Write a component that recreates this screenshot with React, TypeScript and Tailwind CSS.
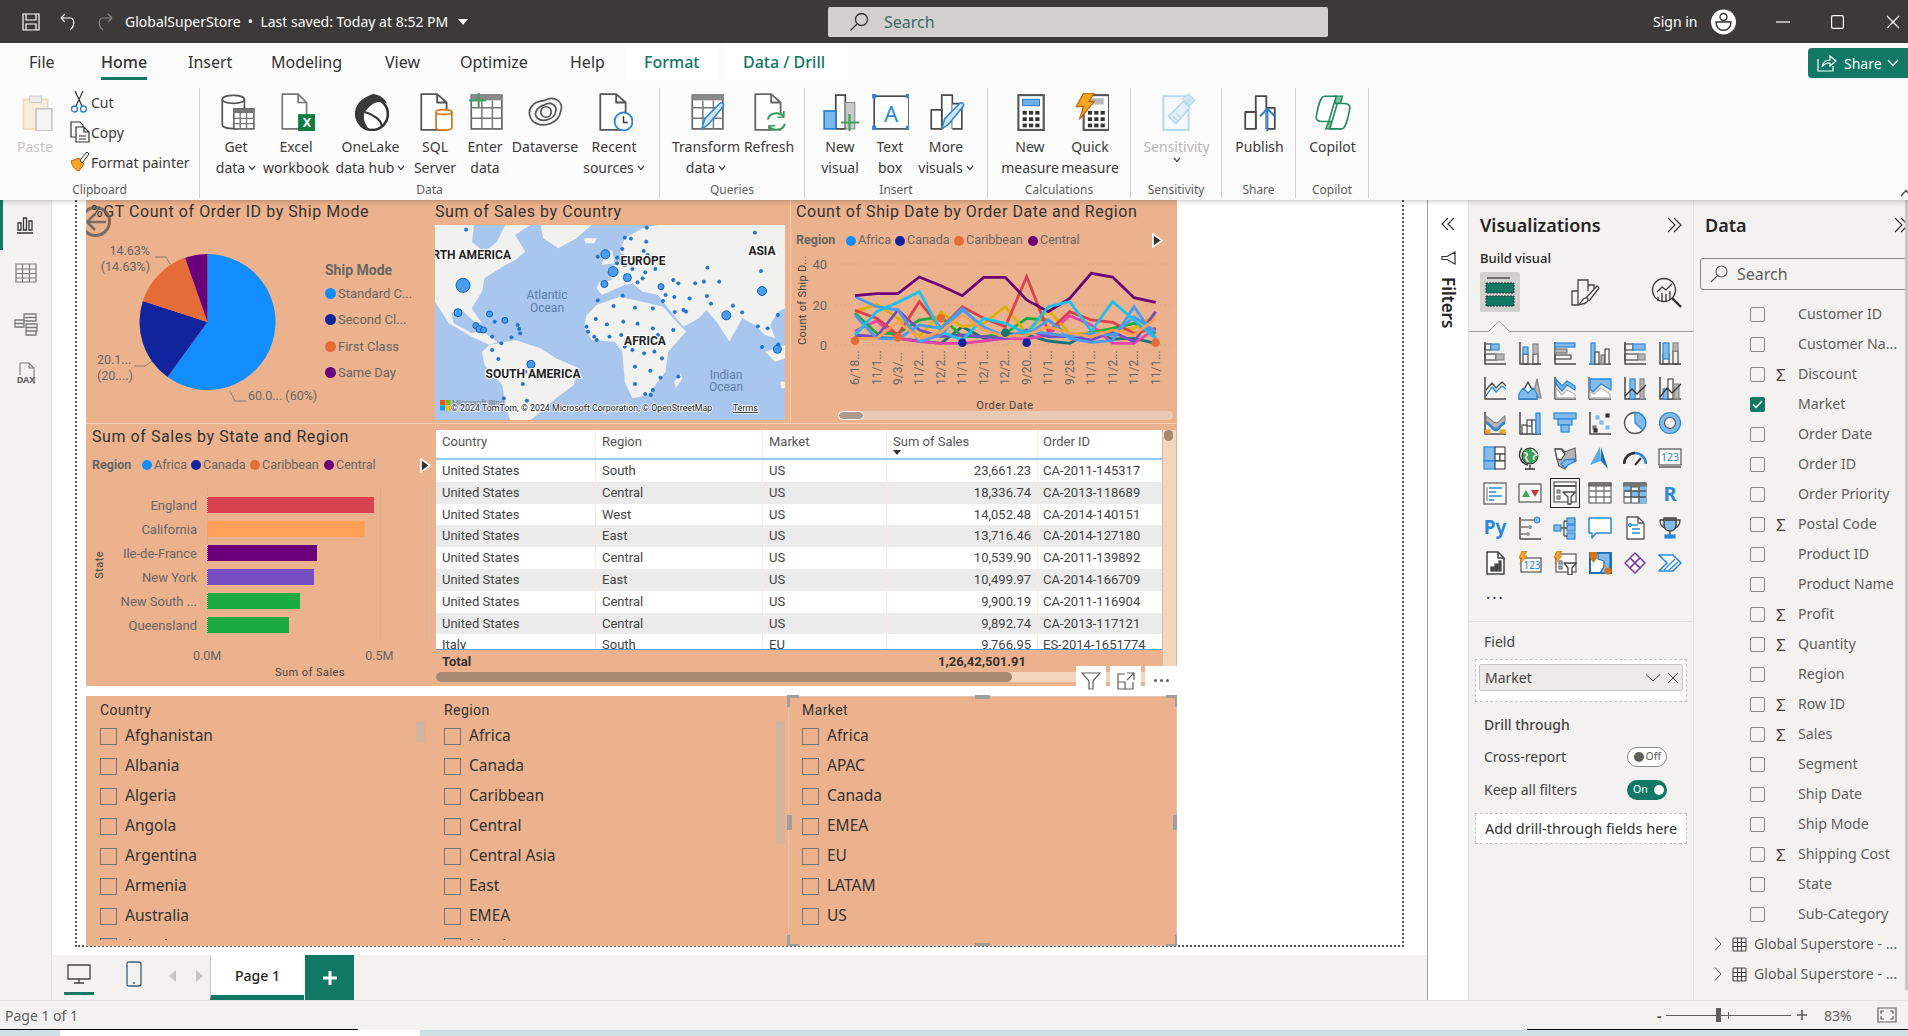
import type { ReactNode } from "react";

const TEAL = "#117865";
const D = "#4a4a4a";
const B = "#2b88d8";
const L = "#82bbea";
const G = "#b5b5b5";
const W = "#ffffff";

function Rc(x: number, y: number, w: number, h: number, f = "none", s = D, sw = 1.2) {
  return <rect x={x} y={y} width={w} height={h} fill={f} stroke={s} strokeWidth={sw} />;
}
function Pt(d: string, s = D, f = "none", sw = 1.3) {
  return <path d={d} stroke={s} fill={f} strokeWidth={sw} strokeLinejoin="round" />;
}
const Axis = Pt("M2 1V23H23", D, "none", 1.5);

function Ico({ size = 38, vb = 36, children, className = "" }: { size?: number; vb?: number; children: ReactNode; className?: string }) {
  return (
    <svg width={size} height={size} viewBox={`0 0 ${vb} ${vb}`} className={`block shrink-0 ${className}`} fill="none">
      {children}
    </svg>
  );
}

const tableIcon = (
  <>
    <rect x="5" y="2" width="29" height="32" fill={W} stroke="#666" strokeWidth="1.6" />
    <rect x="5" y="2" width="29" height="5" fill="#8a8a8a" />
    {Pt("M5 14H34M5 24H34M15 7V34M25 7V34", "#777", "none", 1.4)}
  </>
);
const barsIcon = (
  <>
    {Pt("M14 34V2H24V34", D, W, 1.6)}
    {Pt("M24 10H33V34H24", D, W, 1.6)}
    {Pt("M4 34V16H14V34Z", D, W, 1.6)}
  </>
);
const pencil = Pt("M14 34L17 24L31 10C33 8 36 11 34 13L20 30Z", "#2b88d8", "#cfe5f7", 1.5);
const calc = (
  <>
    <rect x="7" y="2" width="24" height="33" fill={W} stroke="#555" strokeWidth="2" />
    {[18, 24, 30].flatMap((y) =>
      [11, 17, 23].map((x) => <rect key={`${x}${y}`} x={x} y={y - 1} width="4" height="3.5" fill="#333" />),
    )}
  </>
);

const ribbonIcons: Record<string, ReactNode> = {
  get: (
    <>
      <path d="M5 6C5 1 26 1 26 6V30C26 35 5 35 5 30Z" fill={W} stroke="#555" strokeWidth="1.6" />
      <path d="M5 6C5 11 26 11 26 6" stroke="#555" strokeWidth="1.6" />
      <rect x="16" y="15" width="19" height="19" fill={W} stroke="#555" strokeWidth="1.4" />
      <rect x="16" y="15" width="19" height="4" fill="#777" />
      {Pt("M16 24H35M16 29H35M22 19V34M28 19V34", "#777")}
    </>
  ),
  excel: (
    <>
      {Pt("M5 1H20L28 9V34H5Z M20 1V9H28", "#777", W, 1.6)}
      <rect x="20" y="20" width="17" height="16" fill="#107c41" />
      <text x="28.5" y="32.5" textAnchor="middle" fontSize="12" fontWeight="700" fill="#fff" fontFamily="Noto Sans">X</text>
    </>
  ),
  onelake: (
    <>
      <circle cx="19" cy="20" r="15" fill={W} stroke="#333" strokeWidth="2.4" />
      <path d="M4 20C3 8 12 4 20 1C27 2 31 5 33 10C24 6 18 10 12 18C10 24 12 30 17 35C9 33 5 28 4 20Z" fill="#3a3a3a" />
      <path d="M12 18C20 20 28 26 28 31" stroke="#333" strokeWidth="2" />
    </>
  ),
  sql: (
    <>
      {Pt("M5 1H20L29 9V35H5Z M20 1V9H29", "#555", W, 1.7)}
      <path d="M19 18C19 15 34 15 34 18V33C34 36 19 36 19 33Z" fill={W} stroke="#d9731a" strokeWidth="1.6" />
      <path d="M19 18C19 21 34 21 34 18" stroke="#d9731a" strokeWidth="1.6" />
    </>
  ),
  enter: (
    <>
      {tableIcon}
      {Pt("M12 0V14M3 7H19", "#3fa35b", "none", 2)}
    </>
  ),
  dataverse: (
    <>
      <path d="M18 7C26 2 36 8 33 17C31 29 18 32 10 29C3 26 1 17 6 12C10 7 15 8 18 7Z" stroke="#555" strokeWidth="1.6" />
      <path d="M18 11C24 8 30 12 28 18C27 25 16 28 11 24C7 20 9 14 18 11Z" stroke="#555" strokeWidth="1.6" />
      <circle cx="19" cy="18" r="5" stroke="#555" strokeWidth="1.6" />
    </>
  ),
  recent: (
    <>
      {Pt("M5 1H20L29 9V35H5Z M20 1V9H29", "#555", W, 1.7)}
      <circle cx="27" cy="27" r="8.5" fill={W} stroke="#2b88d8" strokeWidth="1.8" />
      {Pt("M27 22V28H31", "#333", "none", 1.4)}
    </>
  ),
  transform: (
    <>
      {tableIcon}
      {pencil}
    </>
  ),
  refresh: (
    <>
      {Pt("M5 1H20L29 9V35H5Z M20 1V9H29", "#666", W, 1.7)}
      <circle cx="25" cy="27" r="9" fill={W} stroke="none" />
      {Pt("M17 25C18 19 27 17 32 22M33 29C32 35 23 37 18 32", "#3b9b5a", "none", 2)}
      {Pt("M32 17V23H26M18 37V31H24", "#3b9b5a", "none", 1.6)}
    </>
  ),
  newvisual: (
    <>
      <rect x="14" y="2" width="9" height="32" fill={W} stroke="#444" strokeWidth="1.6" />
      <rect x="23" y="9" width="9" height="25" fill="#c9c9c9" stroke="#888" />
      <rect x="3" y="17" width="11" height="17" fill="#7db9ea" stroke="#2b7cd3" strokeWidth="1.6" />
      {Pt("M27 20V36M19 28H36", "#3fa35b", "none", 2)}
    </>
  ),
  textbox: (
    <>
      <rect x="3" y="3" width="33" height="31" fill={W} stroke="#444" strokeWidth="1.5" />
      {[
        [1, 1],
        [33, 1],
        [1, 31],
        [33, 31],
      ].map(([x, y]) => (
        <rect key={`${x}${y}`} x={x} y={y} width="4" height="4" fill="#2b88d8" />
      ))}
      <text x="19" y="27" textAnchor="middle" fontSize="21" fill="#2b88d8" fontFamily="Noto Sans">A</text>
    </>
  ),
  more: (
    <>
      {barsIcon}
      {pencil}
    </>
  ),
  measure: (
    <>
      {calc}
      <rect x="11" y="6" width="16" height="6" fill="#6cb0e6" stroke="#2b7cd3" />
    </>
  ),
  quick: (
    <>
      <g transform="translate(5 0)">{calc}</g>
      <rect x="17" y="5" width="14" height="6" fill="#bbb" />
      <path d="M12 0H22L17 8H22L8 25L12 13H5Z" fill="#f6a623" stroke="#c9610e" strokeWidth="1.2" />
    </>
  ),
  sensitivity: (
    <>
      <rect x="5" y="3" width="24" height="32" fill="#f2f8fc" stroke="#b6d8ee" strokeWidth="1.8" />
      <path d="M10 22L24 8L30 14L17 29Z" fill="#e4f0f8" stroke="#b6d8ee" strokeWidth="1.6" />
      <path d="M23 6L29 1L35 7L30 12Z" fill="#cfe4f2" stroke="#b6d8ee" />
      {Pt("M14 22L19 27M17 19L22 24", "#b6d8ee")}
    </>
  ),
  publish: (
    <>
      {Pt("M14 34V3H24V34", D, W, 1.7)}
      {Pt("M4 34V18H14V34Z", D, W, 1.7)}
      {Pt("M24 14H32V34H24", D, W, 1.7)}
      {Pt("M25 36V15M18 22L25 15L32 22", "#2b7cd3", "none", 1.9)}
    </>
  ),
  copilot: (
    <>
      <path d="M19 3H27L25 10H20Z" fill="#7cc29a" stroke="#1f8a5b" strokeWidth="1.3" />
      <path d="M11 34H19L20 27H14Z" fill="#7cc29a" stroke="#1f8a5b" strokeWidth="1.3" />
      <path d="M10 3C6 3 4 12 2 23C2 26 4 27 8 27H14L21 3Z" fill={W} stroke="#1f8a5b" strokeWidth="1.5" />
      <path d="M26 34C30 34 32 25 34 14C34 11 32 10 28 10H22L15 34Z" fill={W} stroke="#1f8a5b" strokeWidth="1.5" />
    </>
  ),
};

const vizIcons: ReactNode[] = [
  <>{Axis}{Rc(2, 3, 6, 6)}{Rc(8, 3, 8, 6, L, B)}{Rc(2, 13, 11, 6)}{Rc(13, 13, 8, 6, G, "#888")}</>,
  <>{Axis}{Rc(5, 13, 5, 10)}{Rc(5, 6, 5, 7, L, B)}{Rc(15, 13, 5, 10)}{Rc(15, 3, 5, 10, G, "#888")}</>,
  <>{Axis}{Rc(2, 2, 20, 4, L, B)}{Rc(2, 8, 12, 4, G, "#777")}{Rc(2, 14, 16, 4)}</>,
  <>{Pt("M1 23H23")}{Rc(3, 2, 4, 21, L, B)}{Rc(7, 11, 4, 12, W)}{Rc(13, 14, 4, 9, G, "#777")}{Rc(17, 8, 4, 15, W)}</>,
  <>{Axis}{Rc(2, 3, 8, 6)}{Rc(10, 3, 12, 6, L, B)}{Rc(2, 13, 13, 6)}{Rc(15, 13, 7, 6, G, "#888")}</>,
  <>{Axis}{Rc(5, 13, 6, 10)}{Rc(5, 2, 6, 16, L, B)}{Rc(15, 10, 5, 13)}{Rc(15, 2, 5, 8, G, "#888")}</>,
  <>{Axis}{Pt("M3 14L9 7L13 12L19 6L23 10")}{Pt("M3 20L9 11L13 16L19 10L23 13", B)}</>,
  <>{Pt("M15 20L19 3L23 22Z", "#888", G)}{Pt("M1 23L10 6L19 23Z", "#333", W)}{Pt("M1 23V18L5 12L10 17L15 12L19 18V23Z", B, L)}</>,
  <>{Axis}{Pt("M3 3L9 10L14 5L22 10V14L14 9L9 15L3 8Z", B, L)}{Pt("M3 12L9 19L14 14L22 18V22H3Z", G, W)}</>,
  <>{Pt("M1 23H23M1 1V23", "#555")}{Pt("M2 3H23V14L13 8L5 16L2 13Z", B, L)}{Pt("M2 16L6 18L13 12L22 18V22H2Z", "#bbb", W)}</>,
  <>{Axis}{Rc(7, 3, 5, 20, L, B)}{Rc(17, 3, 4, 20, G, "#888")}{Pt("M2 20L9 13L14 18L23 9", "#333")}</>,
  <>{Axis}{Rc(5, 13, 6, 10, L, B)}{Rc(10, 3, 5, 20, W)}{Rc(16, 8, 5, 15, G, "#888")}{Pt("M2 21L9 12L14 17L23 8", "#333")}</>,
  <>{Axis}{Pt("M3 5C9 8 9 12 13 12C17 12 17 8 22 5V10C18 13 17 17 13 17C9 17 8 13 3 10Z", "#888", G)}{Pt("M3 12C8 12 8 19 13 19C17 19 17 12 22 12", B, "none", 2.4)}{Rc(3, 19, 4, 3, "#f6a623", "#f6a623")}{Rc(17, 19, 5, 3, "#f6a623", "#f6a623")}</>,
  <>{Axis}{Rc(4, 14, 5, 9, W)}{Rc(9, 9, 5, 6, W)}{Rc(14, 9, 4, 14, W)}{Rc(18, 2, 4, 21, L, B)}</>,
  <>{Rc(1, 2, 22, 6, L, B)}{Rc(5, 8, 14, 6, L, B)}{Rc(8, 14, 8, 7, L, B)}</>,
  <>{Axis}{Rc(5, 15, 3, 3, "#777", "#777")}{Rc(8, 5, 3, 3, L, L)}{Rc(12, 10, 3, 3, L, L)}{Rc(18, 3, 3, 3, "#333", "#333")}{Rc(6, 18, 3, 3, "#333", "#333")}{Rc(18, 15, 3, 3, L, L)}</>,
  <>
    <circle cx="12" cy="12" r="10.5" fill={W} stroke="#555" strokeWidth="1.3" />
    {Pt("M12 12V1.5A10.5 10.5 0 0 1 20 19Z", B, L)}
  </>,
  <>
    <circle cx="12" cy="12" r="8" fill="none" stroke={L} strokeWidth="5" />
    <circle cx="12" cy="12" r="10.5" stroke={B} strokeWidth="1.2" />
    <circle cx="12" cy="12" r="5.5" stroke="#555" strokeWidth="1.2" />
  </>,
  <>{Rc(1, 1, 11, 14, L, B)}{Rc(12, 1, 10, 7, W)}{Rc(12, 8, 5, 7, W)}{Rc(17, 8, 5, 7, W)}{Rc(1, 15, 11, 8, L, B)}{Rc(12, 15, 10, 8, W)}</>,
  <>
    <circle cx="12" cy="10" r="8" fill="#3fa35b" stroke="#333" />
    {Pt("M6 7C9 6 10 9 8 11C7 13 10 14 10 16M14 3C14 6 18 6 19 9C16 9 15 11 16 14", W, "none", 1.6)}
    {Pt("M4 2C-1 8 2 17 10 19M12 19V23M7 23H17", "#333", "none", 1.4)}
  </>,
  <>
    {Pt("M2 3H9L12 6L22 2L23 15L15 16L12 23L6 20L4 13Z", "#666", G)}
    {Pt("M2 3H8L12 8L8 14L4 13Z", "#555", W)}
    {Pt("M12 14L22 13L21 16L15 19L12 22L8 18Z", B, L)}
  </>,
  <>
    <path d="M12 1L2 19L13 15Z" fill="#5aa9e6" />
    <path d="M13 1L13 15L20 23Z" fill="#1f6fb2" />
  </>,
  <>
    {Pt("M1 18A11 11 0 0 1 12 7", "#333", "none", 2.6)}
    {Pt("M12 7A11 11 0 0 1 23 18", B, "none", 2.6)}
    {Pt("M1 21H23", "#fff")}
    {Pt("M12 19L18 12", "#333", "none", 2)}
  </>,
  <>
    {Rc(1, 3, 22, 16, "#f8f8f8", "#555")}
    {Pt("M1 21H23", "#666", "none", 1.6)}
    <text x="12" y="15" textAnchor="middle" fontSize="10.5" fill="#2b88d8" fontFamily="Noto Sans">123</text>
  </>,
  <>{Rc(1, 2, 22, 21, W, "#555")}{Pt("M6 7H19M6 11H13M6 15H19M6 19H11", B, "none", 1.5)}{Pt("M4 6V20", "#888")}</>,
  <>
    {Rc(1, 3, 22, 18, "#f8f8f8", "#555")}
    <path d="M4 16L8 9L12 16Z" fill="#3fa35b" />
    <path d="M13 9H21L17 16Z" fill="#d13438" />
  </>,
  <>{Rc(1, 1, 22, 20, W, "#555")}{Pt("M1 5H23", "#555", "none", 2)}{Rc(4, 9, 3, 3, G, "#777")}{Rc(4, 15, 3, 3, G, "#777")}{Pt("M10 11H22L18 16V23H15V16Z", "#444", W)}</>,
  <>{Rc(1, 2, 22, 20, W, "#666")}{Rc(1, 2, 22, 3, "#777", "#666")}{Pt("M1 10H23M1 16H23M8 5V22M16 5V22", "#777")}</>,
  <>{Rc(1, 2, 22, 20, W, "#666")}{Rc(1, 2, 22, 4, "#777", "#666")}{Rc(8, 10, 7, 6, L, L)}{Rc(16, 6, 7, 16, L, L)}{Rc(1, 6, 7, 4, L, L)}{Pt("M1 10H23M1 16H23M8 5V22M16 5V22", "#555")}</>,
  <text x="12" y="20" textAnchor="middle" fontSize="20" fontWeight="700" fill="#2b88d8" fontFamily="Noto Sans">R</text>,
  <text x="12" y="18" textAnchor="middle" fontSize="19" fontWeight="700" fill="#2b88d8" fontFamily="Noto Sans">Py</text>,
  <>{Axis}{Pt("M2 4H16M2 11H10M2 18H8", "#777")}<circle cx="19" cy="4" r="3" fill={L} stroke={B} /><circle cx="12" cy="11" r="2" fill="#999" /><circle cx="10" cy="18" r="2" fill="#999" /></>,
  <>{Rc(1, 9, 7, 6, L, B)}{Rc(14, 2, 8, 6, L, B)}{Rc(14, 9, 8, 6, L, B)}{Rc(14, 17, 8, 6, L, B)}{Pt("M8 12H14M11 5V20M11 5H14M11 20H14", "#555")}</>,
  <>{Pt("M1 2H23V17H8L4 22V17H1Z", B, W, 1.5)}</>,
  <>{Pt("M4 1H15L21 7V23H4Z M15 1V7H21", "#555", W)}{Pt("M9 9H15M9 13H17M9 17H17", B)}<circle cx="7" cy="9" r="1.6" fill={L} stroke={B} /></>,
  <>
    {Pt("M6 2H18V9C18 13 15 15 12 15C9 15 6 13 6 9Z", "#444", L, 1.5)}
    <rect x="6" y="2" width="12" height="3" fill="#555" />
    {Pt("M6 4H2C2 9 4 11 7 12M18 4H22C22 9 20 11 17 12M12 15V19", "#444")}
    {Rc(7, 19, 10, 3, B, B)}
  </>,
  <>{Pt("M4 1H15L21 7V23H4Z M15 1V7H21", "#444", W, 1.5)}{Rc(8, 16, 3, 4, "#444", "#444")}{Rc(12, 13, 3, 7, "#444", "#444")}{Rc(16, 10, 2, 10, "#444", "#444")}</>,
  <>
    {Rc(3, 7, 20, 14, "#f8f8f8", "#555")}
    <text x="14" y="18" textAnchor="middle" fontSize="10" fill="#2b88d8" fontFamily="Noto Sans">123</text>
    <path d="M4 0H9L6 5H9L2 13L4 7H1Z" fill="#f6a623" stroke="#c9610e" strokeWidth=".6" />
  </>,
  <>
    {Rc(3, 3, 20, 18, W, "#555")}
    {Rc(6, 10, 3, 3, G, "#777")}
    {Rc(6, 15, 3, 3, G, "#777")}
    {Pt("M11 12H23L19 17V24H15V17Z", "#444", W)}
    <path d="M4 0H9L6 5H9L2 13L4 7H1Z" fill="#f6a623" stroke="#c9610e" strokeWidth=".6" />
  </>,
  <>
    {Rc(2, 2, 21, 20, W, "#1f6fb2", 2)}
    {Pt("M10 2V8L16 10V16L12 22H22V2Z", "#1f6fb2", L)}
    <path d="M2 1H9V7L5.5 12L2 7Z" fill="#d9731a" />
    <circle cx="20" cy="20" r="3.5" fill="#d9731a" />
    <circle cx="16" cy="15" r="1.3" fill="#d9731a" />
  </>,
  <>
    {Pt("M12 2L17 7L12 12L7 7Z", "#7b3ea8", W, 1.6)}
    {Pt("M7 7L12 12L7 17L2 12Z", "#7b3ea8", W, 1.6)}
    {Pt("M17 7L22 12L17 17L12 12Z", "#7b3ea8", W, 1.6)}
    {Pt("M12 12L17 17L12 22L7 17Z", "#7b3ea8", W, 1.6)}
  </>,
  <>{Pt("M1 4H15L23 12L15 20H1L9 12Z", B, W, 1.6)}{Pt("M6 19L17 8M11 19L20 11", B)}</>,
];

function Chev({ className = "" }: { className?: string }) {
  return (
    <svg width="8" height="6" viewBox="0 0 8 6" className={`inline-block ${className}`} fill="none">
      <path d="M1 1L4 4.5L7 1" stroke="#444" strokeWidth="1.2" />
    </svg>
  );
}

type RibbonItem = { w: number; icon: string; l1: string; l2?: string; chev?: boolean; muted?: boolean };

function Item({ w, icon, l1, l2, chev, muted }: RibbonItem) {
  return (
    <div className={`flex flex-col items-center pt-[5px] shrink-0 ${muted ? "text-[#b9b7b5]" : "text-[#3b3a39]"}`} style={{ width: w }}>
      <Ico>{ribbonIcons[icon]}</Ico>
      <div className="mt-[5px] text-[14px] leading-[21px] whitespace-nowrap text-center">{l1}</div>
      <div className="text-[14px] leading-[21px] whitespace-nowrap text-center flex items-center gap-[3px]">
        {l2}
        {chev && <Chev />}
      </div>
    </div>
  );
}

function Group({ w, pl, label, children }: { w: number; pl: number; label: string; children: ReactNode }) {
  return (
    <div className="flex flex-col shrink-0 border-r border-[#d6d4d2] h-[110px]" style={{ width: w }}>
      <div className="flex h-[94px]" style={{ paddingLeft: pl }}>
        {children}
      </div>
      <div className="text-center text-[12px] leading-[17px] text-[#605e5c]">{label}</div>
    </div>
  );
}

function TitleBar() {
  return (
    <div className="flex items-center h-[43px] shrink-0 bg-[#3b3a39] text-white">
      <div className="flex items-center w-[828px] pl-[22px]">
        <svg width="18" height="18" viewBox="0 0 18 18" fill="none" stroke="#fff" strokeWidth="1.2">
          <path d="M1 1H17V17H1ZM4 1V7H14V1M4 17V11H14V17" />
        </svg>
        <svg width="18" height="20" viewBox="0 0 18 20" fill="none" stroke="#fff" strokeWidth="1.2" className="ml-[19px]">
          <path d="M2 6H11C16 6 16 14 11 18M2 6L6 2M2 6L6 10" />
        </svg>
        <svg width="18" height="20" viewBox="0 0 18 20" fill="none" stroke="#8a8886" strokeWidth="1.2" className="ml-[19px]">
          <path d="M16 6H7C2 6 2 14 7 18M16 6L12 2M16 6L12 10" />
        </svg>
        <span className="ml-[11px] text-[14px] whitespace-nowrap">GlobalSuperStore&nbsp; •&nbsp; Last saved: Today at 8:52 PM</span>
        <svg width="10" height="6" viewBox="0 0 10 6" className="ml-[10px]">
          <path d="M0 0H10L5 6Z" fill="#fff" />
        </svg>
      </div>
      <div className="flex items-center w-[500px] h-[30px] bg-[#d2d0ce] rounded-[2px] pl-[21px] shrink-0">
        <svg width="20" height="20" viewBox="0 0 20 20" fill="none" stroke="#333" strokeWidth="1.3">
          <circle cx="12.5" cy="7.5" r="6" />
          <path d="M8 12L1.5 18.5" />
        </svg>
        <span className="ml-[15px] text-[16px] text-[#3e6b65]">Search</span>
      </div>
      <div className="flex items-center pl-[325px]">
        <span className="text-[14px] w-[58px] whitespace-nowrap">Sign in</span>
        <svg width="25" height="30" viewBox="0 0 25 30" fill="none" stroke="#333" strokeWidth="1.4">
          <circle cx="12.5" cy="15" r="12.5" fill="#fff" stroke="none" />
          <circle cx="12.5" cy="10" r="3.5" />
          <path d="M5 15H20C20 26 5 26 5 15Z" />
        </svg>
        <svg width="14" height="14" viewBox="0 0 14 14" stroke="#fff" strokeWidth="1.2" className="ml-[40px]">
          <path d="M0 7H14" />
        </svg>
        <svg width="13" height="14" viewBox="0 0 13 14" fill="none" stroke="#fff" strokeWidth="1.2" className="ml-[41px]">
          <rect x=".6" y=".6" width="11.8" height="12.8" rx="1.5" />
        </svg>
        <svg width="14" height="14" viewBox="0 0 14 14" stroke="#fff" strokeWidth="1.2" className="ml-[42px]">
          <path d="M1 1L13 13M13 1L1 13" />
        </svg>
      </div>
    </div>
  );
}

function Tabs() {
  const plain = [
    ["File", 72],
    ["Insert", 83],
    ["Modeling", 114],
    ["View", 75],
    ["Optimize", 110],
    ["Help", 55],
  ] as const;
  return (
    <div className="flex h-[37px] pl-[29px] text-[16px] text-[#323130] shrink-0">
      <div className="flex items-center" style={{ width: plain[0][1] }}>File</div>
      <div className="w-[87px] flex">
        <span className="flex items-center h-full border-b-[3px] border-[#117865] pt-[3px] font-medium">Home</span>
      </div>
      {plain.slice(1).map(([t, w]) => (
        <div key={t} className="flex items-center" style={{ width: w }}>{t}</div>
      ))}
      <div className="w-[94px] pl-[19px] flex items-center bg-white text-[#117865] font-medium">Format</div>
      <div className="w-[124px] ml-[5px] pl-[19px] flex items-center bg-white text-[#117865] font-medium">Data / Drill</div>
      <div className="flex-1 flex justify-end pt-[5px]">
        <div className="flex items-center w-[100px] h-[30px] bg-[#117865] rounded-l-[4px] text-white text-[14px] pl-[9px]">
          <svg width="20" height="18" viewBox="0 0 20 18" fill="none" stroke="#fff" strokeWidth="1.2">
            <path d="M1 5V17H16V12M5 13C6 8 9 6 13 6V2L19 7L13 12V9C10 9 7 10 5 13Z" />
          </svg>
          <span className="ml-[7px]">Share</span>
          <svg width="12" height="8" viewBox="0 0 12 8" fill="none" stroke="#fff" strokeWidth="1.3" className="ml-[5px]">
            <path d="M1 1L6 6.5L11 1" />
          </svg>
        </div>
      </div>
    </div>
  );
}

function Ribbon() {
  return (
    <div className="relative z-20 h-[157px] shrink-0 bg-[#fbfbfb] shadow-[0_2px_4px_rgba(0,0,0,0.18)] overflow-hidden">
      <Tabs />
      <div className="flex pt-[8px]">
        <Group w={200} pl={0} label="Clipboard">
          <div className="w-[70px] flex flex-col items-center pt-[5px] text-[#c8c6c4]">
            <Ico>
              <rect x="7" y="6" width="23" height="28" fill="#f9ecd9" stroke="#ecd9bd" strokeWidth="1.6" />
              <rect x="13" y="3" width="11" height="6" fill="#eee" stroke="#ccc" />
              <rect x="19" y="15" width="15" height="21" fill="#f5f5f5" stroke="#c4c4c4" strokeWidth="1.5" />
            </Ico>
            <div className="mt-[5px] text-[14px] leading-[21px]">Paste</div>
          </div>
          <div className="flex flex-col -mt-[1px] text-[14px] text-[#3b3a39]">
            <div className="flex items-center h-[30px]">
              <svg width="18" height="24" viewBox="0 0 18 24" fill="none" className="mr-[3px]">
                <path d="M5 1L12 16M13 1L6 16" stroke="#333" strokeWidth="1.2" />
                <circle cx="4.5" cy="19" r="3" stroke="#2b7cd3" strokeWidth="1.3" />
                <circle cx="13.5" cy="19" r="3" stroke="#2b7cd3" strokeWidth="1.3" />
              </svg>
              Cut
            </div>
            <div className="flex items-center h-[30px]">
              <svg width="20" height="22" viewBox="0 0 20 22" fill="none" stroke="#333" strokeWidth="1.2" className="mr-[1px]">
                <path d="M6 16H1V1H10L13 4V6M6 6H14L19 11V21H6Z M14 6V11H19M9 15H16M9 18H16" />
              </svg>
              Copy
            </div>
            <div className="flex items-center h-[30px] whitespace-nowrap">
              <svg width="20" height="22" viewBox="0 0 20 22" fill="none" className="mr-[1px]">
                <path d="M1 10L9 7L14 13L9 20C5 19 2 15 1 10Z" fill="#f6a623" stroke="#c9610e" />
                <path d="M10 9L17 1L19 3L12 12Z" fill="#fff" stroke="#333" />
              </svg>
              Format painter
            </div>
          </div>
        </Group>
        <Group w={460} pl={12} label="Data">
          <Item w={48} icon="get" l1="Get" l2="data" chev />
          <Item w={72} icon="excel" l1="Excel" l2="workbook" />
          <Item w={77} icon="onelake" l1="OneLake" l2="data hub" chev />
          <Item w={52} icon="sql" l1="SQL" l2="Server" />
          <Item w={48} icon="enter" l1="Enter" l2="data" />
          <Item w={72} icon="dataverse" l1="Dataverse" />
          <Item w={66} icon="recent" l1="Recent" l2="sources" chev />
        </Group>
        <Group w={145} pl={12} label="Queries">
          <Item w={68} icon="transform" l1="Transform" l2="data" chev />
          <Item w={58} icon="refresh" l1="Refresh" />
        </Group>
        <Group w={183} pl={11} label="Insert">
          <Item w={48} icon="newvisual" l1="New" l2="visual" />
          <Item w={52} icon="textbox" l1="Text" l2="box" />
          <Item w={60} icon="more" l1="More" l2="visuals" chev />
        </Group>
        <Group w={143} pl={10} label="Calculations">
          <Item w={64} icon="measure" l1="New" l2="measure" />
          <Item w={56} icon="quick" l1="Quick" l2="measure" />
        </Group>
        <Group w={91} pl={0} label="Sensitivity">
          <Item w={91} icon="sensitivity" l1="Sensitivity" muted chev />
        </Group>
        <Group w={74} pl={1} label="Share">
          <Item w={73} icon="publish" l1="Publish" />
        </Group>
        <Group w={73} pl={0} label="Copilot">
          <Item w={73} icon="copilot" l1="Copilot" />
        </Group>
      </div>
      <svg width="12" height="8" viewBox="0 0 12 8" fill="none" stroke="#444" strokeWidth="1.3" className="absolute right-[-4px] bottom-[3px]">
        <path d="M1 7L6 1.5L11 7" />
      </svg>
    </div>
  );
}

function LeftRail() {
  return (
    <div className="w-[52px] shrink-0 bg-[#f3f2f1] border-r border-[#e1dfdd] flex flex-col">
      <div className="h-[50px] border-l-[3px] border-[#117865] pt-[17px] pl-[13px]">
        <svg width="18" height="17" viewBox="0 0 18 17" fill="none" stroke="#333" strokeWidth="1.3">
          <path d="M1 16H17M2 13V6H5V13ZM7.5 13V1H10.5V13ZM13 13V4H16V13Z" />
        </svg>
      </div>
      <div className="pl-[15px] pt-[13px]">
        <svg width="22" height="20" viewBox="0 0 22 20" fill="none" stroke="#7a7a7a" strokeWidth="1.2">
          <path d="M1 1H21V19H1ZM1 6H21M1 10.5H21M1 15H21M7.5 1V19M14.5 1V19" />
        </svg>
      </div>
      <div className="pl-[14px] pt-[29px]">
        <svg width="24" height="24" viewBox="0 0 24 24" fill="none" stroke="#7a7a7a" strokeWidth="1.3">
          <path d="M10 2H22V9H10ZM10 5.5H22M12 12H23V19H12ZM12 15.5H23M1 8H10V15H1ZM1 11.5H10M12 19V23H22V19" />
        </svg>
      </div>
      <div className="pl-[14px] pt-[26px]">
        <svg width="24" height="24" viewBox="0 0 24 24" fill="none" stroke="#7a7a7a" strokeWidth="1.1">
          <path d="M6 13V1H15L20 6V22M15 1V6H20" />
          <text x="12" y="21" textAnchor="middle" fontSize="9" fontWeight="700" fill="#666" stroke="none" fontFamily="Noto Sans">DAX</text>
        </svg>
      </div>
    </div>
  );
}

function pieSlice(cx: number, cy: number, r: number, a0: number, a1: number) {
  const p = (a: number) => [cx + r * Math.sin(a * 2 * Math.PI), cy - r * Math.cos(a * 2 * Math.PI)];
  const [x0, y0] = p(a0);
  const [x1, y1] = p(a1);
  return `M${cx} ${cy}L${x0} ${y0}A${r} ${r} 0 ${a1 - a0 > 0.5 ? 1 : 0} 1 ${x1} ${y1}Z`;
}

function ChartTitle({ children, className = "" }: { children: ReactNode; className?: string }) {
  return (
    <div className={`font-['Roboto',sans-serif] text-[16px] leading-[24px] tracking-[0.035em] text-[#333] whitespace-nowrap ${className}`}>
      {children}
    </div>
  );
}

function PiePane() {
  const legend = [
    ["Standard C...", "#118dff"],
    ["Second Cl...", "#12239e"],
    ["First Class", "#e66c37"],
    ["Same Day", "#6b007b"],
  ];
  return (
    <div className="w-[349px] shrink-0 relative">
      <ChartTitle className="pl-[5px]">%GT Count of Order ID by Ship Mode</ChartTitle>
      <div className="absolute left-[-6px] top-[6px] w-[31px] h-[31px] rounded-full border-[3px] border-[#5f5b58] opacity-80 flex items-center justify-center">
        <svg width="22" height="18" viewBox="0 0 22 18" fill="none" stroke="#5f5b58" strokeWidth="2.6">
          <path d="M21 9H2M10 1L2 9L10 17" />
        </svg>
      </div>
      <div className="flex">
        <svg width="235" height="200" viewBox="86 224 235 200" className="shrink-0 font-['Roboto',sans-serif]">
          <path d={pieSlice(207.5, 322, 68, 0, 0.6)} fill="#118dff" />
          <path d={pieSlice(207.5, 322, 68, 0.6, 0.8)} fill="#12239e" />
          <path d={pieSlice(207.5, 322, 68, 0.8, 0.9463)} fill="#e66c37" />
          <path d={pieSlice(207.5, 322, 68, 0.9463, 1)} fill="#6b007b" />
          <g fill="none" stroke="#8f7b6c">
            <path d="M155 257H166L170 264" />
            <path d="M134 366H145L152 361" />
            <path d="M230 391L235 401H246" />
          </g>
          <g fontSize="12.5" fill="#666">
            <text x="150" y="255" textAnchor="end">14.63%</text>
            <text x="150" y="271" textAnchor="end">(14.63%)</text>
            <text x="97" y="364">20.1...</text>
            <text x="97" y="380">(20....)</text>
            <text x="248" y="400">60.0... (60%)</text>
          </g>
        </svg>
        <div className="pl-[4px] pt-[36px] font-['Roboto',sans-serif]">
          <div className="text-[14px] leading-[20px] font-bold text-[#666]">Ship Mode</div>
          {legend.map(([t, c]) => (
            <div key={t} className="flex items-center h-[26.5px] text-[13px] text-[#666] whitespace-nowrap">
              <span className="w-[11px] h-[11px] rounded-full mr-[2px]" style={{ background: c }} />
              {t}
            </div>
          ))}
        </div>
      </div>
    </div>
  );
}

const mapPolys = [
  "853,90 1040,90 1010,120 1030,170 1010,195 985,215 950,250 945,290 925,340 945,385 930,380 905,345 885,355 890,385 925,415 945,405 960,425 975,440 960,450 925,425 880,385 853,320",
  "1060,90 1160,90 1130,130 1095,160 1065,130",
  "960,450 1010,435 1060,460 1090,490 1135,520 1125,570 1090,610 1060,650 1040,675 1000,675 990,620 985,570 950,510 945,470",
  "1170,330 1215,305 1260,320 1300,335 1320,370 1345,410 1310,470 1305,530 1270,600 1240,610 1225,560 1220,470 1205,440 1160,435 1145,395 1150,360",
  "1170,280 1175,262 1200,255 1190,225 1215,200 1240,195 1215,170 1225,130 1260,100 1290,90 1539,90 1539,340 1525,350 1510,390 1520,430 1500,420 1480,390 1455,370 1430,440 1405,380 1385,345 1370,370 1340,395 1305,330 1290,300 1260,290 1240,265 1225,270 1210,280 1180,300",
  "1185,170 1200,165 1205,205 1180,210",
  "1145,130 1170,130 1165,145 1148,145",
  "1322,560 1335,535 1338,550 1325,580",
  "1500,470 1539,450 1539,490 1520,500",
  "1530,560 1539,560 1539,580 1532,580",
];
const bigDots = [
  [908, 271, 7],
  [898, 353, 4],
  [1187, 178, 4.5],
  [1202, 230, 5],
  [1225, 200, 4.5],
  [1185, 267, 3.5],
  [1494, 288, 4.5],
  [1424, 361, 4.5],
  [1524, 463, 4],
  [1041, 508, 4],
  [960, 357, 3],
  [990, 376, 3],
  [933, 392, 3],
  [940, 402, 3.5],
  [948, 405, 3],
  [1230, 248, 4],
  [1296, 275, 3],
];
const smallDots = "914,104 1268,98 1225,128 1237,131 1267,140 1480,113 1220,162 1262,168 1172,185 1210,188 1270,180 1210,205 1240,222 1265,232 1285,222 1250,262 1260,250 1320,255 1330,265 1363,265 1380,260 1410,260 1387,218 1492,228 1305,300 1322,306 1352,310 1386,303 1394,326 1437,332 1455,352 1486,394 1505,400 1525,360 1494,456 1526,448 1172,316 1203,333 1221,302 1245,338 1280,340 1300,318 1323,351 1340,345 1345,350 1150,395 1168,372 1190,388 1222,380 1250,386 1280,400 1320,405 1153,410 1165,425 1170,435 1195,425 1218,420 1290,420 1225,455 1240,465 1263,475 1283,470 1298,490 1245,515 1275,527 1295,548 1245,567 1280,585 1265,597 1276,600 1330,545 965,425 970,380 1003,427 983,445 1015,390 1018,402 1020,415 965,465 977,492 1030,530 1025,567 988,610 1033,617 1045,640"
  .split(" ")
  .map((s) => s.split(",").map(Number));
const mx = (x: number) => (x - 853) / 1.96;
const my = (y: number) => (y - 90) / 3;

function MapPane() {
  return (
    <div className="w-[355px] shrink-0">
      <ChartTitle className="h-[25px]">Sum of Sales by Country</ChartTitle>
      <svg width="350" height="195" viewBox="0 0 350 195" className="block font-['Roboto',sans-serif]">
        <rect width="350" height="195" fill="#a9c6ef" />
        {mapPolys.map((p) => (
          <polygon
            key={p}
            fill="#f1f1ef"
            points={p
              .split(" ")
              .map((s) => {
                const [x, y] = s.split(",").map(Number);
                return `${mx(x)},${my(y)}`;
              })
              .join(" ")}
          />
        ))}
        <polygon points="39,0 70,0 62,17 49,27 37,17" fill="#a9c6ef" />
        {bigDots.map(([x, y, r]) => (
          <circle key={`${x}${y}`} cx={mx(x)} cy={my(y)} r={r} fill="#4a9cf0" stroke="#0f5fb5" />
        ))}
        {smallDots.map(([x, y]) => (
          <circle key={`${x}${y}`} cx={mx(x)} cy={my(y)} r="1.7" fill="#1a78e0" stroke="#0f5fb5" strokeWidth=".5" />
        ))}
        <g fontSize="12" fill="#222" fontWeight="700" stroke="#fff" strokeWidth="2.2" paintOrder="stroke" textAnchor="middle">
          <text x="76" y="34" textAnchor="end">NORTH AMERICA</text>
          <text x="208" y="40">EUROPE</text>
          <text x="327" y="30">ASIA</text>
          <text x="210" y="120">AFRICA</text>
          <text x="98" y="153">SOUTH AMERICA</text>
        </g>
        <g fontSize="12" fill="#5d7fa8" textAnchor="middle">
          <text x="112" y="74">Atlantic</text>
          <text x="112" y="87">Ocean</text>
          <text x="291" y="154">Indian</text>
          <text x="291" y="166">Ocean</text>
        </g>
        <rect x="5" y="175" width="5" height="5" fill="#f25022" />
        <rect x="10.5" y="175" width="5" height="5" fill="#7fba00" />
        <rect x="5" y="180.5" width="5" height="5" fill="#00a4ef" />
        <rect x="10.5" y="180.5" width="5" height="5" fill="#ffb900" />
        <text x="17" y="180" fontSize="8" fill="#777">Microsoft Bing</text>
        <text x="16" y="186" fontSize="8.8" fill="#222" stroke="#fff" strokeWidth="1.5" paintOrder="stroke">© 2024 TomTom, © 2024 Microsoft Corporation, © OpenStreetMap</text>
        <text x="298" y="186" fontSize="8.8" fill="#222" stroke="#fff" strokeWidth="1.5" paintOrder="stroke" textDecoration="underline">Terms</text>
      </svg>
    </div>
  );
}

function Legend() {
  return (
    <div className="flex items-center h-[20px] font-['Roboto',sans-serif] text-[12.5px] text-[#666] whitespace-nowrap">
      <span className="font-bold w-[50px]">Region</span>
      <span className="flex items-center gap-[2px] w-[49px]"><i className="w-[10px] h-[10px] rounded-full bg-[#118dff]" />Africa</span>
      <span className="flex items-center gap-[2px] w-[59px]"><i className="w-[10px] h-[10px] rounded-full bg-[#12239e]" />Canada</span>
      <span className="flex items-center gap-[2px] w-[74px]"><i className="w-[10px] h-[10px] rounded-full bg-[#e66c37]" />Caribbean</span>
      <span className="flex items-center gap-[2px]"><i className="w-[10px] h-[10px] rounded-full bg-[#6b007b]" />Central</span>
    </div>
  );
}

const PlayArrow = (
  <svg width="11" height="15" viewBox="0 0 11 15">
    <path d="M1 1L10 7.5L1 14Z" fill="#333" stroke="#fff" strokeWidth="1.6" />
  </svg>
);

const xs = [222, 287, 351, 415, 480, 544, 608, 673, 737, 802, 866, 931, 995, 1059, 1124];
const series: [string, number[]][] = [
  ["#197278", [425, 428, 430, 438, 445, 395, 430, 415, 420, 438, 445, 410, 432, 430, 445]],
  ["#e645ab", [408, 378, 430, 440, 445, 445, 438, 430, 432, 420, 362, 390, 445, 445, 400]],
  ["#1aab40", [355, 415, 415, 375, 365, 425, 425, 415, 370, 375, 425, 412, 400, 385, 415]],
  ["#d9b300", [350, 328, 370, 425, 352, 395, 385, 335, 415, 345, 415, 415, 410, 400, 360]],
  ["#744ec2", [420, 425, 345, 405, 425, 420, 425, 430, 405, 425, 425, 435, 410, 440, 350]],
  ["#d9434f", [346, 370, 420, 320, 400, 335, 370, 395, 245, 410, 350, 375, 382, 415, 400]],
  ["#4a9cf0", [360, 430, 432, 390, 400, 340, 400, 425, 420, 375, 430, 442, 436, 335, 430]],
  ["#4a9cf0", [305, 335, 345, 440, 420, 345, 395, 425, 410, 415, 425, 415, 420, 365, 410]],
  ["#6b007b", [302, 296, 296, 246, 272, 302, 247, 247, 315, 350, 310, 235, 246, 308, 322]],
  ["#1ac0ee", [420, 350, 322, 290, 410, 435, 370, 385, 415, 335, 320, 408, 320, 375, 430]],
  ["#ffa058", [430, 430, 380, 430, 410, 360, 405, 425, 420, 395, 415, 425, 405, 420, 370]],
];
const xLabels = ["6/18...", "11/1...", "9/3/...", "11/2...", "12/2...", "11/1...", "12/1...", "12/2...", "9/20...", "11/1...", "9/25...", "11/1...", "11/2...", "11/2...", "11/1..."];
// chart data is noted in 3x crop units, cx/cy bring it back to this svg's pixels
const cx = (x: number) => x / 3 - 10;
const cy = (y: number) => y / 3 - 55;

function LinePane() {
  return (
    <div className="w-[387px] shrink-0 border-l border-[#f5cfb3] pl-[5px]">
      <ChartTitle>Count of Ship Date by Order Date and Region</ChartTitle>
      <div className="flex items-center justify-between pr-[14px] pt-[7px] h-[26px]">
        <Legend />
        {PlayArrow}
      </div>
      <svg width="386" height="174" viewBox="0 0 386 174" className="block -ml-[5px] font-['Roboto',sans-serif]">
        {[14, 55, 95].map((y) => (
          <path key={y} d={`M45 ${y}H381`} stroke="#d4a98a" strokeDasharray="1.5 3" />
        ))}
        <g fontSize="13" fill="#666" textAnchor="end">
          <text x="36" y="19">40</text>
          <text x="36" y="60">20</text>
          <text x="36" y="100">0</text>
        </g>
        <text transform="translate(15 95) rotate(-90)" fontSize="11" letterSpacing=".3" fill="#444">Count of Ship D...</text>
        {series.map(([c, ys], i) => (
          <polyline key={i} points={ys.map((y, j) => `${cx(xs[j])},${cy(y)}`).join(" ")} fill="none" stroke={c} strokeWidth="2.8" />
        ))}
        {[
          [222, 437, "#e66c37"],
          [351, 427, "#e66c37"],
          [480, 370, "#e66c37"],
          [1124, 443, "#e66c37"],
          [544, 443, "#12239e"],
          [737, 443, "#12239e"],
          [673, 413, "#197278"],
        ].map(([x, y, c]) => (
          <circle key={`${x}${y}`} cx={cx(x as number)} cy={cy(y as number)} r="4.3" fill={c as string} />
        ))}
        {xLabels.map((t, i) => (
          <text key={i} transform={`translate(${cx(xs[i]) + 4} 135) rotate(-90)`} fontSize="12" fill="#666">{t}</text>
        ))}
        <text x="214" y="159" textAnchor="middle" fontSize="11" letterSpacing=".5" fill="#444">Order Date</text>
        <rect x="47" y="161" width="335" height="9" rx="4.5" fill="#e8c9b4" />
        <rect x="47.5" y="161.5" width="25" height="8" rx="4" fill="#ab9a8d" stroke="#fff" />
      </svg>
    </div>
  );
}

const bars = [
  ["England", 167, "#d9434f"],
  ["California", 158, "#ffa058"],
  ["Ile-de-France", 110, "#6b007b"],
  ["New York", 107, "#744ec2"],
  ["New South ...", 93, "#1aab40"],
  ["Queensland", 82, "#1aab40"],
] as const;

function BarPane() {
  return (
    <div className="w-[350px] shrink-0 pl-[6px] relative">
      <ChartTitle className="pt-[1px]">Sum of Sales by State and Region</ChartTitle>
      <div className="flex items-center justify-between pr-[5px] pt-[6px] h-[26px]">
        <Legend />
        {PlayArrow}
      </div>
      <div className="relative flex mt-[18px]">
        <div className="flex items-center w-[14px]">
          <span className="[writing-mode:vertical-rl] rotate-180 text-[11px] font-['Roboto',sans-serif] tracking-[0.04em] text-[#444]">State</span>
        </div>
        <div className="flex-1 flex flex-col">
          <div className="absolute left-[115px] top-[-5px] h-[152px] border-l border-dotted border-[#d4a98a]" />
          <div className="absolute left-[288px] top-[-5px] h-[152px] border-l border-dotted border-[#d4a98a]" />
          {bars.map(([t, w, c]) => (
            <div key={t} className="flex items-center h-[24px] font-['Roboto',sans-serif]">
              <div className="w-[91px] text-right text-[13px] leading-none text-[#666] whitespace-nowrap">{t}</div>
              <div className="h-[16px] ml-[10px]" style={{ width: w, background: c }} />
            </div>
          ))}
        </div>
        <div className="absolute left-[337px] top-[-5px] h-[153px] border-l border-[#d7bca8]" />
      </div>
      <div className="relative font-['Roboto',sans-serif] text-[12.5px] text-[#666] h-[26px] pt-[10px]">
        <span className="ml-[101px]">0.0M</span>
        <span className="ml-[144px]">0.5M</span>
      </div>
      <div className="text-center pl-[92px] text-[11px] tracking-[0.04em] font-['Roboto',sans-serif] text-[#444] pt-[2px]">Sum of Sales</div>
    </div>
  );
}

const rows = [
  ["South", "US", "23,661.23", "CA-2011-145317"],
  ["Central", "US", "18,336.74", "CA-2013-118689"],
  ["West", "US", "14,052.48", "CA-2014-140151"],
  ["East", "US", "13,716.46", "CA-2014-127180"],
  ["Central", "US", "10,539.90", "CA-2011-139892"],
  ["East", "US", "10,499.97", "CA-2014-166709"],
  ["Central", "US", "9,900.19", "CA-2011-116904"],
  ["Central", "US", "9,892.74", "CA-2013-117121"],
];

function TablePane() {
  const cell = "px-[6px] border-r border-[#fbe9dd] shrink-0 overflow-hidden whitespace-nowrap";
  const row = (c: string, r: string, m: string, s: string, o: string, alt: boolean) => (
    <div key={o} className={`flex h-[21.8px] leading-[21.8px] ${alt ? "bg-[#ebebeb]" : "bg-white"}`}>
      <div className={`${cell} w-[160px]`}>{c}</div>
      <div className={`${cell} w-[167px]`}>{r}</div>
      <div className={`${cell} w-[124px]`}>{m}</div>
      <div className={`${cell} w-[151px] text-right`}>{s}</div>
      <div className="px-[5px] w-[124px]">{o}</div>
    </div>
  );
  return (
    <div className="relative w-[741px] shrink-0 pt-[6px] flex font-['Roboto',sans-serif] text-[13px] text-[#444]">
      <div className="w-[726px] shrink-0">
        <div className="flex h-[30px] bg-white border-b-2 border-[#93c9f5] text-[#555] leading-[24px]">
          <div className={`${cell} w-[160px]`}>Country</div>
          <div className={`${cell} w-[167px]`}>Region</div>
          <div className={`${cell} w-[124px]`}>Market</div>
          <div className={`${cell} w-[151px] relative`}>
            Sum of Sales
            <svg width="8" height="5" viewBox="0 0 8 5" className="absolute left-[6px] top-[20px]">
              <path d="M0 0H8L4 5Z" fill="#333" />
            </svg>
          </div>
          <div className="px-[5px] w-[124px]">Order ID</div>
        </div>
        <div className="h-[190px] overflow-hidden border-b border-[#5a9fe0]">
          {rows.map((r, i) => row("United States", r[0], r[1], r[2], r[3], i % 2 === 1))}
          {row("Italy", "South", "EU", "9,766.95", "ES-2014-1651774", false)}
        </div>
        <div className="flex items-center h-[22px] pt-[2px] font-bold text-[#333]">
          <div className="w-[596px] pl-[6px] flex justify-between pr-[6px]">
            <span>Total</span>
            <span>1,26,42,501.91</span>
          </div>
        </div>
        <div className="h-[10px] bg-[#f3d5c0] rounded-full">
          <div className="h-full w-[576px] bg-[#a78872] rounded-full" />
        </div>
      </div>
      <div className="w-[13px] h-[250px] bg-[#f3d5c0] mx-auto">
        <div className="w-[9px] h-[11px] ml-[1px] rounded-full bg-[#a78872]" />
      </div>
      <div className="absolute right-0 bottom-[-4px] flex gap-[4px] z-10">
        <div className="w-[30px] h-[24px] pt-[5px] bg-white flex items-center justify-center">
          <svg width="20" height="18" viewBox="0 0 20 18" fill="none" stroke="#605e5c" strokeWidth="1.2">
            <path d="M1 1H19L12 9V17H8V9Z" />
          </svg>
        </div>
        <div className="w-[31px] h-[24px] pt-[5px] bg-white flex items-center justify-center">
          <svg width="18" height="18" viewBox="0 0 18 18" fill="none" stroke="#605e5c" strokeWidth="1.2">
            <path d="M8 2H1V17H16V10M1 10H8V17M10 1H17V8M17 1L10 8" />
          </svg>
        </div>
        <div className="w-[32px] h-[24px] pt-[5px] bg-white flex items-center justify-center gap-[3px]">
          <i className="w-[3px] h-[3px] rounded-full bg-[#605e5c]" />
          <i className="w-[3px] h-[3px] rounded-full bg-[#605e5c]" />
          <i className="w-[3px] h-[3px] rounded-full bg-[#605e5c]" />
        </div>
      </div>
    </div>
  );
}

function Slicer({ title, items, w, thumb }: { title: string; items: string[]; w: number; thumb?: [number, number, number] }) {
  return (
    <div className="relative shrink-0 h-[244px] overflow-hidden pl-[14px]" style={{ width: w }}>
      <div className="h-[25px] pt-[4px] font-['Roboto',sans-serif] text-[14px] leading-[20px] tracking-[0.03em] text-[#333]">{title}</div>
      {items.map((t) => (
        <div key={t} className="flex items-center h-[30px] text-[15.5px] text-[#333]">
          <span className="w-[17px] h-[17px] border-[1.5px] border-[#777] mr-[8px] shrink-0" />
          {t}
        </div>
      ))}
      {thumb && (
        <div className="absolute w-[9px] bg-[#d3b29e]" style={{ left: thumb[0], top: thumb[1], height: thumb[2] }} />
      )}
    </div>
  );
}

function Handles() {
  const h = "absolute bg-[#a19f9d]";
  const c = "absolute w-[12px] h-[12px] border-[#a19f9d]";
  return (
    <div className="absolute left-[702px] top-0 w-[389px] h-[250px] border border-[#d9c3b4] pointer-events-none">
      <i className={`${c} -left-[2px] -top-[2px] border-l-[3px] border-t-[3px]`} />
      <i className={`${c} -right-[2px] -top-[2px] border-r-[3px] border-t-[3px]`} />
      <i className={`${c} -left-[2px] -bottom-[2px] border-l-[3px] border-b-[3px]`} />
      <i className={`${c} -right-[2px] -bottom-[2px] border-r-[3px] border-b-[3px]`} />
      <i className={`${h} left-[186px] -top-[2px] w-[15px] h-[4px]`} />
      <i className={`${h} left-[186px] -bottom-[2px] w-[15px] h-[4px]`} />
      <i className={`${h} -left-[2px] top-[118px] w-[5px] h-[15px]`} />
      <i className={`${h} -right-[2px] top-[118px] w-[5px] h-[15px]`} />
    </div>
  );
}

function Report() {
  return (
    <div className="w-[1091px] h-[746px] overflow-hidden">
      <div className="flex h-[224px] bg-[#ecb28d] border-b border-[#f5cfb3]">
        <PiePane />
        <MapPane />
        <LinePane />
      </div>
      <div className="flex h-[262px] bg-[#ecb28d]">
        <BarPane />
        <TablePane />
      </div>
      <div className="h-[10px]" />
      <div className="relative flex h-[250px] bg-[#ecb28d]">
        <Slicer title="Country" w={344} thumb={[330, 25, 21]} items={["Afghanistan", "Albania", "Algeria", "Angola", "Argentina", "Armenia", "Australia", "Austria"]} />
        <Slicer title="Region" w={358} thumb={[346, 25, 123]} items={["Africa", "Canada", "Caribbean", "Central", "Central Asia", "East", "EMEA", "North"]} />
        <Slicer title="Market" w={389} items={["Africa", "APAC", "Canada", "EMEA", "EU", "LATAM", "US"]} />
        <Handles />
      </div>
    </div>
  );
}

function PageTabs() {
  return (
    <div className="flex h-[45px] shrink-0 bg-[#f3f2f1]">
      <div className="w-[158px] flex items-start shrink-0">
        <div className="ml-[12px] mt-[9px] w-[30px] border-b-[3px] border-[#117865] pb-[8px] rounded-b-[1px] flex justify-center">
          <svg width="24" height="20" viewBox="0 0 24 20" fill="none" stroke="#444" strokeWidth="1.3">
            <path d="M1 1H23V15H1ZM12 15V19M7 19H17" />
          </svg>
        </div>
        <svg width="16" height="26" viewBox="0 0 16 26" fill="none" stroke="#3b5f78" strokeWidth="1.3" className="ml-[32px] mt-[6px]">
          <path d="M1 3C1 1 2 1 3 1H13C14 1 15 1 15 3V23C15 25 14 25 13 25H3C2 25 1 25 1 23Z" />
          <path d="M7 22H9" />
        </svg>
        <svg width="8" height="12" viewBox="0 0 8 12" className="ml-[27px] mt-[15px]">
          <path d="M7 0V12L0 6Z" fill="#c8c6c4" />
        </svg>
        <svg width="8" height="12" viewBox="0 0 8 12" className="ml-[19px] mt-[15px]">
          <path d="M0 0V12L7 6Z" fill="#c8c6c4" />
        </svg>
      </div>
      <div className="w-[94px] bg-white border-l border-[#c8c6c4] border-b-[5px] border-b-[#117865] flex items-center justify-center text-[14px] text-[#252423] font-medium">Page 1</div>
      <div className="w-[49px] ml-[1px] bg-[#117865] flex items-center justify-center">
        <svg width="14" height="14" viewBox="0 0 14 14" stroke="#fff" strokeWidth="3">
          <path d="M7 0V14M0 7H14" />
        </svg>
      </div>
    </div>
  );
}

function FiltersRail() {
  return (
    <div className="w-[41px] shrink-0 bg-white border-l border-[#a19f9d] flex flex-col items-center">
      <svg width="14" height="14" viewBox="0 0 14 14" fill="none" stroke="#333" strokeWidth="1.2" className="mt-[17px]">
        <path d="M7 1L1 7L7 13M13 1L7 7L13 13" />
      </svg>
      <svg width="15" height="14" viewBox="0 0 15 14" fill="none" stroke="#333" strokeWidth="1.2" className="mt-[20px]">
        <path d="M14 1V13L6 8.5H1V5.5H6Z" />
      </svg>
      <span className="[writing-mode:vertical-rl] text-[17px] font-semibold text-[#252423] mt-[12px]">Filters</span>
    </div>
  );
}

function Toggle({ on }: { on: boolean }) {
  return on ? (
    <div className="flex items-center justify-between w-[40px] h-[20px] rounded-full bg-[#117865] text-white text-[10.5px] pl-[6px] pr-[3px]">
      On<span className="w-[10px] h-[10px] rounded-full bg-white" />
    </div>
  ) : (
    <div className="flex items-center justify-between w-[40px] h-[20px] rounded-full bg-white border border-[#8a8886] text-[#605e5c] text-[10.5px] pl-[6px] pr-[5px]">
      <span className="w-[10px] h-[10px] rounded-full bg-[#605e5c]" />Off
    </div>
  );
}

function VizPane() {
  return (
    <div className="w-[226px] shrink-0 bg-[#f3f2f1] border-l border-[#e1dfdd] border-r flex flex-col">
      <div className="flex items-center justify-between h-[50px] pl-[11px] pr-[10px]">
        <span className="text-[18px] font-semibold text-[#252423]">Visualizations</span>
        <svg width="16" height="16" viewBox="0 0 16 16" fill="none" stroke="#333" strokeWidth="1.2">
          <path d="M1 1L8 8L1 15M7 1L14 8L7 15" />
        </svg>
      </div>
      <div className="pl-[11px] h-[17px] text-[13px] leading-[17px] font-medium text-[#252423]">Build visual</div>
      <div className="relative h-[60px] border-b border-[#a19f9d] mt-[5px]">
        <div className="flex items-start pl-[11px]">
          <div className="w-[40px] h-[40px] bg-[#d2d0ce] rounded-[2px] flex items-center justify-center">
            <svg width="32" height="32" viewBox="0 0 32 32">
              <path d="M3 2H26" stroke="#333" strokeWidth="1.2" />
              <rect x="2" y="7" width="28" height="10" fill={TEAL} stroke="#333" strokeDasharray="2 1" />
              <rect x="2" y="20" width="28" height="10" fill={TEAL} stroke="#333" strokeDasharray="2 1" />
            </svg>
          </div>
          <svg width="30" height="30" viewBox="0 0 30 30" fill="none" stroke="#444" strokeWidth="1.3" className="ml-[50px] mt-[5px]">
            <path d="M2 28V14H8V28H2ZM8 14V3H18V14M18 8H24V12" />
            <path d="M12 27C10 28 10 28 8 28C12 26 12 22 15 21C18 20 19 23 17 25C15 27 14 27 12 27ZM16 21L27 9L29 11L19 24" fill="#f3f2f1" />
          </svg>
          <svg width="32" height="32" viewBox="0 0 32 32" fill="none" stroke="#333" strokeWidth="1.3" className="ml-[51px] mt-[5px]">
            <circle cx="13" cy="13" r="11.5" />
            <path d="M6 15L11 10L15 13L21 7M7 20V24M11 16V25M15 17V25M19 14V23" />
            <path d="M21 21L30 30" strokeWidth="2.4" />
          </svg>
        </div>
        <svg width="22" height="11" viewBox="0 0 22 11" className="absolute left-[19px] -bottom-[1px]">
          <path d="M0 11L11 0L22 11" fill="#f3f2f1" stroke="#a19f9d" />
        </svg>
      </div>
      <div className="grid grid-cols-6 w-[210px] ml-[8px] mt-[3px] auto-rows-[35px] place-items-center">
        {vizIcons.map((icon, i) => (
          <div key={i} className={`w-[30px] h-[30px] flex items-center justify-center ${i === 26 ? "border border-[#252423]" : ""}`}>
            <Ico size={24} vb={24}>{icon}</Ico>
          </div>
        ))}
      </div>
      <div className="pl-[17px] pt-[6px] h-[41px] text-[16px] leading-[14px] tracking-[2px] text-[#333]">...</div>
      <div className="border-t border-[#e1dfdd] pl-[15px] pt-[10px] h-[29px] text-[14px] leading-[20px] text-[#444]">Field</div>
      <div className="mx-[6px] mt-[9px] h-[43px] bg-white border border-dashed border-[#c8c6c4] px-[3px] pt-[4px]">
        <div className="flex items-center justify-between h-[27px] bg-[#edebe9] border border-[#c8c6c4] rounded-[2px] pl-[5px] pr-[4px] text-[14px] text-[#444]">
          Market
          <span className="flex items-center gap-[8px]">
            <svg width="14" height="8" viewBox="0 0 14 8" fill="none" stroke="#444">
              <path d="M0 .5L7 7L14 .5" />
            </svg>
            <svg width="10" height="10" viewBox="0 0 10 10" stroke="#444">
              <path d="M0 0L10 10M10 0L0 10" />
            </svg>
          </span>
        </div>
      </div>
      <div className="pl-[15px] pt-[13px] text-[14px] leading-[20px] font-medium text-[#444]">Drill through</div>
      <div className="flex items-center justify-between pl-[15px] pr-[26px] h-[33px] mt-[5px] text-[14px] text-[#444]">Cross-report<Toggle on={false} /></div>
      <div className="flex items-center justify-between pl-[15px] pr-[26px] h-[33px] text-[14px] text-[#444]">Keep all filters<Toggle on /></div>
      <div className="mx-[6px] mt-[7px] h-[31px] bg-white border border-dashed border-[#c8c6c4] pl-[9px] text-[14.5px] leading-[29px] text-[#333] whitespace-nowrap">Add drill-through fields here</div>
    </div>
  );
}

const fields: [string, boolean, boolean?][] = [
  ["Customer ID", false],
  ["Customer Na...", false],
  ["Discount", true],
  ["Market", false, true],
  ["Order Date", false],
  ["Order ID", false],
  ["Order Priority", false],
  ["Postal Code", true],
  ["Product ID", false],
  ["Product Name", false],
  ["Profit", true],
  ["Quantity", true],
  ["Region", false],
  ["Row ID", true],
  ["Sales", true],
  ["Segment", false],
  ["Ship Date", false],
  ["Ship Mode", false],
  ["Shipping Cost", true],
  ["State", false],
  ["Sub-Category", false],
];

function DataPane() {
  return (
    <div className="relative w-[214px] shrink-0 bg-[#f3f2f1] overflow-hidden">
      <div className="flex items-center justify-between h-[50px] pl-[11px] pr-[0px]">
        <span className="text-[18px] font-semibold text-[#252423]">Data</span>
        <svg width="14" height="16" viewBox="0 0 14 16" fill="none" stroke="#333" strokeWidth="1.2">
          <path d="M1 1L8 8L1 15M7 1L14 8L7 15" />
        </svg>
      </div>
      <div className="flex items-center ml-[6px] mt-[8px] w-[230px] h-[32px] border border-[#8a8886] rounded-[3px] pl-[9px]">
        <svg width="18" height="18" viewBox="0 0 18 18" fill="none" stroke="#555" strokeWidth="1.1">
          <circle cx="11.5" cy="6.5" r="5.5" />
          <path d="M7.5 10.5L1 17" />
        </svg>
        <span className="ml-[9px] text-[16px] text-[#605e5c]">Search</span>
      </div>
      <div className="mt-[9px]">
        {fields.map(([t, sigma, checked]) => (
          <div key={t} className="flex items-center h-[30px] pl-[56px] text-[14.2px] text-[#605e5c] whitespace-nowrap">
            {checked ? (
              <span className="w-[15px] h-[15px] rounded-[2px] bg-[#117865] flex items-center justify-center">
                <svg width="11" height="9" viewBox="0 0 11 9" fill="none" stroke="#fff" strokeWidth="1.5">
                  <path d="M1 4.5L4 7.5L10 1" />
                </svg>
              </span>
            ) : (
              <span className="w-[15px] h-[15px] rounded-[2px] border border-[#8a8886]" />
            )}
            <span className="w-[33px] pl-[11px] text-[17px] leading-none text-[#444]">{sigma ? "Σ" : ""}</span>
            {t}
          </div>
        ))}
        {[0, 1].map((i) => (
          <div key={i} className="flex items-center h-[30px] pl-[20px] text-[14.2px] text-[#605e5c] whitespace-nowrap">
            <svg width="8" height="14" viewBox="0 0 8 14" fill="none" stroke="#555">
              <path d="M1 0.5L7 7L1 13.5" />
            </svg>
            <svg width="15" height="15" viewBox="0 0 15 15" fill="none" stroke="#444" strokeWidth="1.1" className="ml-[10px]">
              <path d="M2 1H13C14 1 14 2 14 2V13C14 14 13 14 13 14H2C1 14 1 13 1 13V2C1 1 2 1 2 1ZM1 5.5H14M1 9.5H14M5.5 1V14M9.5 1V14" />
            </svg>
            <span className="ml-[7px]">Global Superstore - ...</span>
          </div>
        ))}
      </div>
      <div className="absolute right-0 top-0 w-[3px] h-[790px] bg-[#c8c6c4]" />
    </div>
  );
}

function StatusBar() {
  return (
    <div className="flex items-center h-[29px] shrink-0 bg-[#f3f2f1] border-t border-[#e1dfdd] text-[#605e5c]">
      <span className="pl-[5px] text-[14px]">Page 1 of 1</span>
      <div className="ml-auto flex items-center pr-[11px]">
        <span className="text-[14px] font-bold w-[9px]">-</span>
        <div className="relative w-[125px] h-[14px] flex items-center">
          <div className="w-full border-t border-[#605e5c]" />
          <i className="absolute left-[50px] w-[5px] h-[14px] bg-[#605e5c]" />
          <i className="absolute left-[62px] w-px h-[7px] bg-[#605e5c]" />
        </div>
        <svg width="10" height="10" viewBox="0 0 10 10" stroke="#605e5c" strokeWidth="1.6" className="ml-[6px]">
          <path d="M5 0V10M0 5H10" />
        </svg>
        <span className="ml-[17px] w-[28px] text-[14px] whitespace-nowrap">83%</span>
        <svg width="20" height="16" viewBox="0 0 20 16" fill="none" stroke="#605e5c" strokeWidth="1.2" className="ml-[25px]">
          <path d="M1 1H19V15H1ZM4 7V4H7M13 4H16V7M16 9V12H13M7 12H4V9" />
        </svg>
      </div>
    </div>
  );
}

export default function App() {
  return (
    <div className="flex flex-col w-[1908px] h-[1036px] overflow-hidden bg-white font-['Noto_Sans',sans-serif]">
      <TitleBar />
      <Ribbon />
      <div className="flex h-[800px] shrink-0">
        <LeftRail />
        <div className="w-[1375px] shrink-0 flex flex-col">
          <div className="flex-1 bg-white pl-[23px]">
            <div className="w-[1329px] h-[747px] border-l-2 border-r-2 border-b-2 border-dotted border-[#555] pl-[9px]">
              <Report />
            </div>
          </div>
          <PageTabs />
        </div>
        <FiltersRail />
        <VizPane />
        <DataPane />
      </div>
      <StatusBar />
      <div className="flex justify-between h-px shrink-0 bg-[#f3f2f1]">
        <div className="w-[358px] bg-black" />
        <div className="w-[381px] bg-black" />
      </div>
      <div className="flex-1 bg-[#cfe0e4] flex">
        <div className="ml-[60px] w-[360px] bg-white" />
      </div>
    </div>
  );
}
